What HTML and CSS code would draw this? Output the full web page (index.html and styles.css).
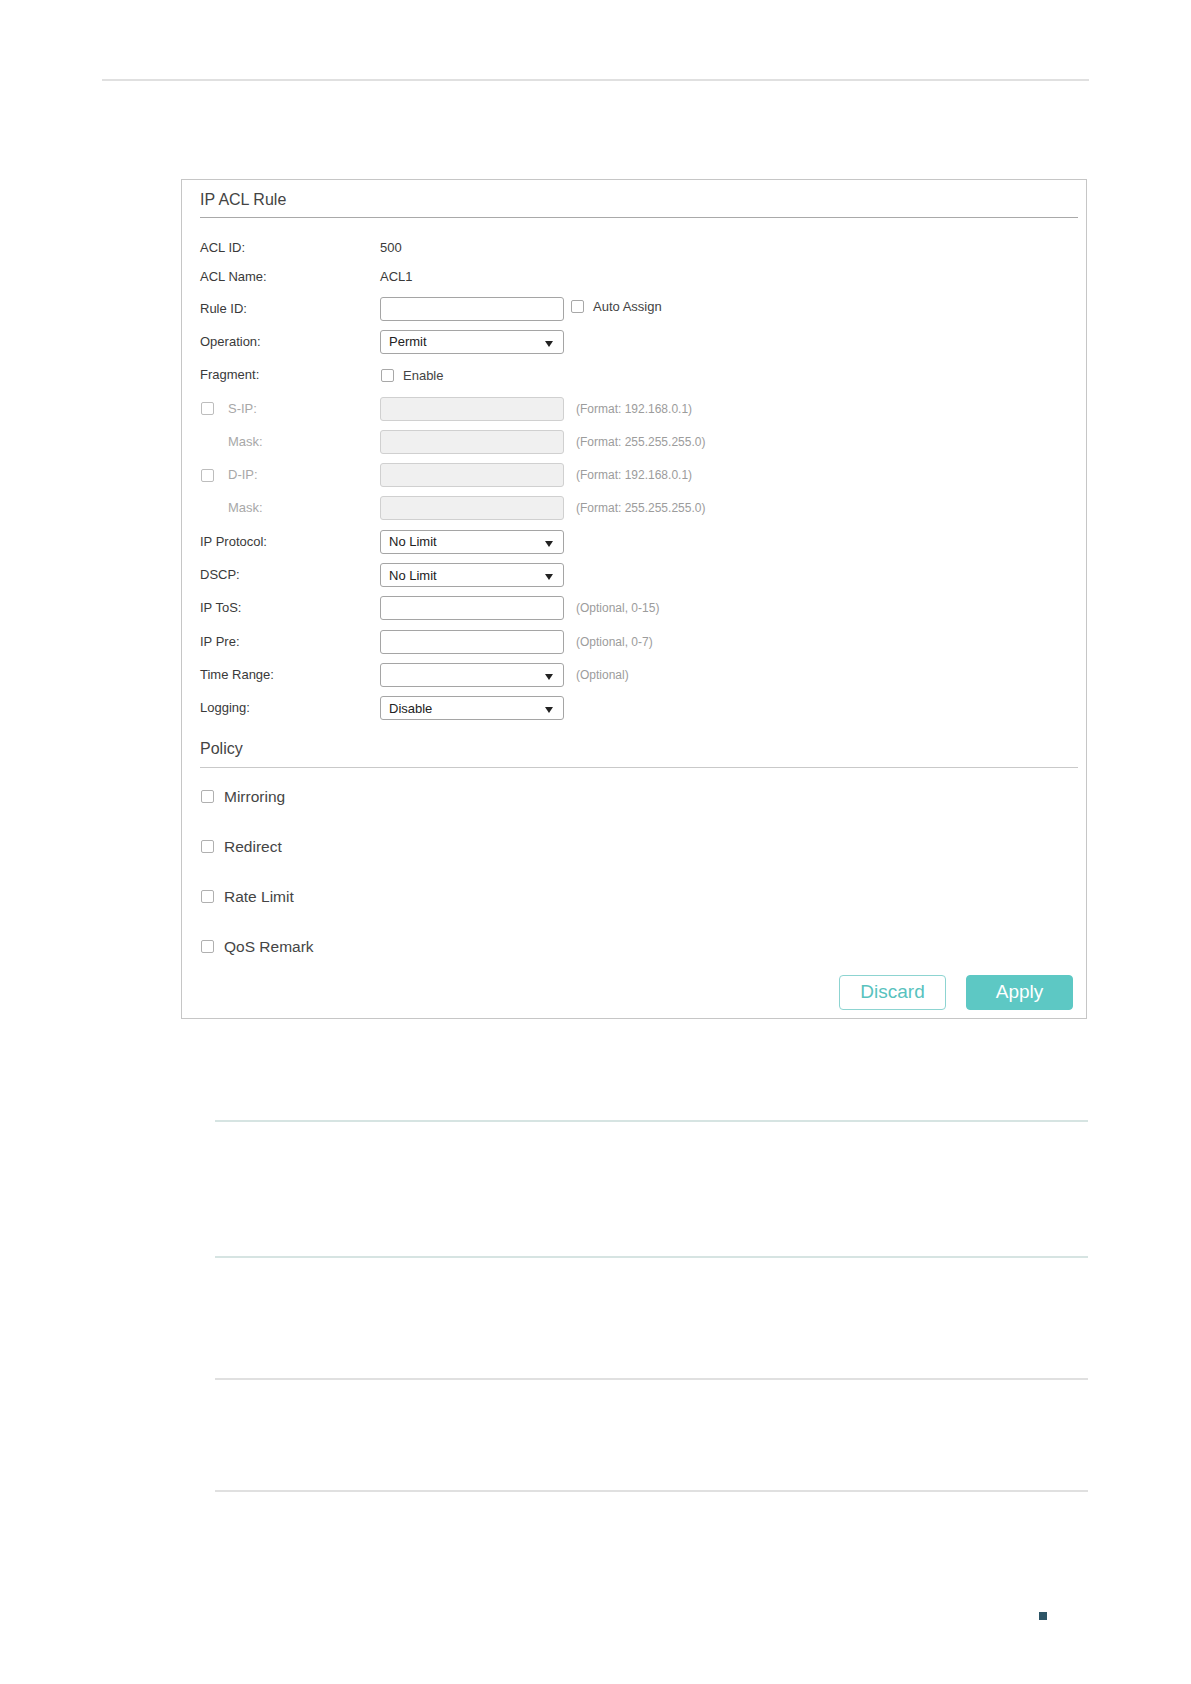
FILE: index.html
```html
<!DOCTYPE html>
<html lang="en">
<head>
<meta charset="utf-8">
<title>IP ACL Rule</title>
<link rel="stylesheet" href="styles.css">
</head>
<body>
<div class="page">
  <div class="top-rule"></div>

  <section class="panel">
    <h2 class="panel-title">IP ACL Rule</h2>

    <div class="form">
      <div class="row row-text">
        <div class="label">ACL ID:</div>
        <div class="field"><span class="value">500</span></div>
      </div>
      <div class="row row-text">
        <div class="label">ACL Name:</div>
        <div class="field"><span class="value">ACL1</span></div>
      </div>
      <div class="row">
        <div class="label">Rule ID:</div>
        <div class="field">
          <span class="input"></span>
          <span class="check check-auto"></span><span class="check-text">Auto Assign</span>
        </div>
      </div>
      <div class="row">
        <div class="label">Operation:</div>
        <div class="field"><span class="input select">Permit</span></div>
      </div>
      <div class="row">
        <div class="label">Fragment:</div>
        <div class="field"><span class="check check-enable"></span><span class="check-text">Enable</span></div>
      </div>
      <div class="row">
        <div class="label disabled"><span class="check check-label disabled-check"></span>S-IP:</div>
        <div class="field"><span class="input input-disabled"></span><span class="hint">(Format: 192.168.0.1)</span></div>
      </div>
      <div class="row">
        <div class="label disabled indent">Mask:</div>
        <div class="field"><span class="input input-disabled"></span><span class="hint">(Format: 255.255.255.0)</span></div>
      </div>
      <div class="row">
        <div class="label disabled"><span class="check check-label disabled-check"></span>D-IP:</div>
        <div class="field"><span class="input input-disabled"></span><span class="hint">(Format: 192.168.0.1)</span></div>
      </div>
      <div class="row">
        <div class="label disabled indent">Mask:</div>
        <div class="field"><span class="input input-disabled"></span><span class="hint">(Format: 255.255.255.0)</span></div>
      </div>
      <div class="row">
        <div class="label">IP Protocol:</div>
        <div class="field"><span class="input select">No Limit</span></div>
      </div>
      <div class="row">
        <div class="label">DSCP:</div>
        <div class="field"><span class="input select">No Limit</span></div>
      </div>
      <div class="row">
        <div class="label">IP ToS:</div>
        <div class="field"><span class="input"></span><span class="hint">(Optional, 0-15)</span></div>
      </div>
      <div class="row">
        <div class="label">IP Pre:</div>
        <div class="field"><span class="input"></span><span class="hint">(Optional, 0-7)</span></div>
      </div>
      <div class="row">
        <div class="label">Time Range:</div>
        <div class="field"><span class="input select"></span><span class="hint">(Optional)</span></div>
      </div>
      <div class="row">
        <div class="label">Logging:</div>
        <div class="field"><span class="input select">Disable</span></div>
      </div>
    </div>

    <h3 class="section-title">Policy</h3>
    <ul class="policy-list">
      <li class="policy-item"><span class="check check-policy"></span>Mirroring</li>
      <li class="policy-item"><span class="check check-policy"></span>Redirect</li>
      <li class="policy-item"><span class="check check-policy"></span>Rate Limit</li>
      <li class="policy-item"><span class="check check-policy"></span>QoS Remark</li>
    </ul>

    <div class="actions">
      <button class="btn btn-outline" type="button">Discard</button>
      <button class="btn btn-primary" type="button">Apply</button>
    </div>
  </section>

  <div class="rules">
    <div class="rule rule-teal rule-1"></div>
    <div class="rule rule-teal rule-2"></div>
    <div class="rule rule-grey rule-3"></div>
    <div class="rule rule-grey rule-4"></div>
  </div>

  <div class="page-mark"></div>
</div>
</body>
</html>
```

FILE: styles.css
```css
* {
  box-sizing: border-box;
}

html, body {
  margin: 0;
  padding: 0;
  background: #ffffff;
}

body {
  font-family: "Liberation Sans", Arial, sans-serif;
  color: #333333;
  width: 1191px;
  min-height: 1684px;
}

.page {
  display: flex;
  flex-direction: column;
  padding-top: 79px;
}

.top-rule {
  margin-left: 102px;
  width: 987px;
  height: 2px;
  background: #e0e0e0;
}

/* Panel */
.panel {
  margin-top: 98px;
  margin-left: 181px;
  width: 906px;
  border: 1px solid #c6c6c6;
  padding: 0 8px 8px 18px;
  display: flex;
  flex-direction: column;
}

.panel-title {
  margin: 0;
  padding: 10px 0 7px;
  font-size: 16px;
  line-height: 20px;
  font-weight: normal;
  color: #444444;
  border-bottom: 1px solid #a9a9a9;
}

.form {
  margin-top: 15px;
  display: flex;
  flex-direction: column;
}

.row {
  display: grid;
  grid-template-columns: 180px 1fr;
  align-items: center;
  height: 33.3px;
}

.row-text {
  height: 29px;
}

.row-text + .row:not(.row-text) {
  margin-top: 1px;
}

.label {
  font-size: 13px;
  line-height: 16px;
  color: #3a3a3a;
  display: flex;
  align-items: center;
}

.label.disabled {
  color: #a8a8a8;
}

.label.indent {
  padding-left: 28px;
}

.field {
  display: flex;
  align-items: center;
  font-size: 13px;
}

.value {
  color: #3a3a3a;
  font-size: 13px;
}

.input {
  width: 184px;
  height: 24px;
  border: 1px solid #a5a5a5;
  border-radius: 3px;
  background: #ffffff;
  display: flex;
  align-items: center;
  padding-left: 8px;
  font-size: 13px;
  color: #222222;
  position: relative;
}

.input-disabled {
  background: #f0f0f0;
  border-color: #d0d0d0;
}

.select::after {
  content: "";
  position: absolute;
  right: 10px;
  top: 10px;
  width: 0;
  height: 0;
  border-left: 4px solid transparent;
  border-right: 4px solid transparent;
  border-top: 6px solid #222222;
}

.hint {
  margin-left: 12px;
  font-size: 12px;
  color: #9c9c9c;
}

/* Checkboxes */
.check {
  display: inline-block;
  width: 13px;
  height: 13px;
  border: 1px solid #a8a8a8;
  border-radius: 2px;
  background: #ffffff;
  flex: none;
}

.check-auto {
  margin-left: 7px;
  margin-right: 9px;
  margin-top: -4px;
}

.check-enable {
  margin-left: 1px;
  margin-right: 9px;
}

.check-label {
  margin-left: 1px;
  margin-right: 14px;
}

.disabled-check {
  border-color: #bdbdbd;
}

.check-text {
  font-size: 13px;
  color: #444444;
}

.check-auto + .check-text {
  margin-top: -4px;
}

/* Policy */
.section-title {
  margin: 14px 0 0;
  padding: 0 0 8px;
  font-size: 16px;
  line-height: 20px;
  font-weight: normal;
  color: #444444;
  border-bottom: 1px solid #c9c9c9;
}

.policy-list {
  list-style: none;
  margin: 4px 0 0;
  padding: 0;
  display: flex;
  flex-direction: column;
}

.policy-item {
  height: 50px;
  display: flex;
  align-items: center;
  font-size: 15.5px;
  color: #454545;
}

.check-policy {
  margin-left: 1px;
  margin-right: 10px;
  border-color: #b0b0b0;
}

/* Actions */
.actions {
  margin-top: 3px;
  margin-right: 5px;
  display: flex;
  justify-content: flex-end;
  gap: 20px;
}

.btn {
  width: 107px;
  height: 35px;
  border-radius: 4px;
  font-family: "Liberation Sans", Arial, sans-serif;
  font-size: 19px;
  padding: 0;
  cursor: pointer;
}

.btn-outline {
  background: #ffffff;
  border: 1px solid #8dd4d1;
  color: #58c2be;
}

.btn-primary {
  background: #5dc8c4;
  border: 1px solid #5dc8c4;
  color: #ffffff;
}

/* Lower rules */
.rules {
  display: flex;
  flex-direction: column;
  margin-left: 215px;
  width: 873px;
}

.rule {
  height: 2px;
}

.rule-teal {
  background: #d6e4e2;
}

.rule-grey {
  background: #e0e0e0;
}

.rule-1 { margin-top: 101px; }
.rule-2 { margin-top: 134px; }
.rule-3 { margin-top: 120px; }
.rule-4 { margin-top: 110px; }

.page-mark {
  margin-top: 120px;
  margin-left: 1039px;
  width: 8px;
  height: 8px;
  background: #2d5566;
}
```
